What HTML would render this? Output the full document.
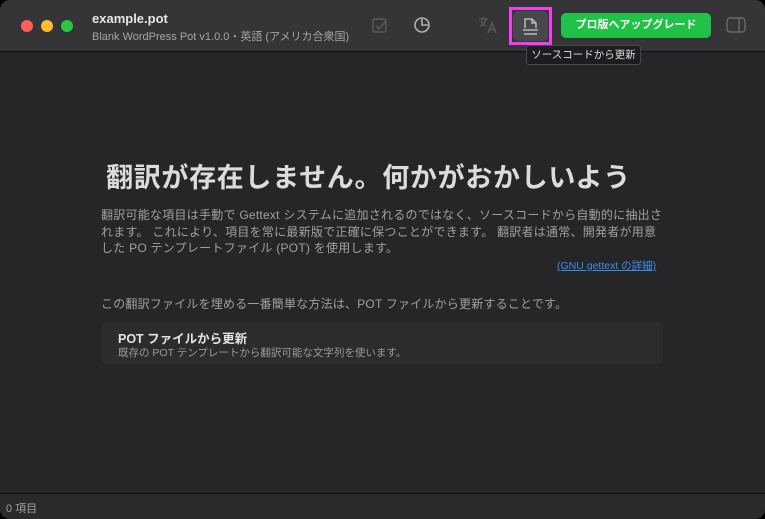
<!DOCTYPE html>
<html><head><meta charset="utf-8"><style>
*{margin:0;padding:0;box-sizing:border-box}
body{width:765px;height:519px;background:#000;font-family:"Liberation Sans","Noto Sans CJK JP",sans-serif;overflow:hidden}
.win{position:absolute;left:0;top:0;width:765px;height:519px;background:#262628;border-radius:10px;overflow:hidden}
.bar{position:absolute;left:0;top:0;width:765px;height:52px;background:#353538;border-bottom:1px solid #0e0e0f}
.dot{position:absolute;top:20px;width:12px;height:12px;border-radius:50%}
.t1{position:absolute;left:92px;top:11px;color:#e6e6e6;font-weight:bold;font-size:13px}
.t2{position:absolute;left:92px;top:28px;color:#a5a5a7;font-size:11px}
.btn{position:absolute;left:561px;top:13px;width:150px;height:25px;background:#1fc147;border-radius:5px;color:#fff;font-size:11px;font-weight:bold;text-align:center;line-height:25px}
.hl{position:absolute;left:509px;top:7px;width:43px;height:38px;border:3px solid #f03ef0}
.hlin{position:absolute;left:513px;top:11px;width:35px;height:30px;background:#48484b;border-radius:5px}
.tip{position:absolute;left:526px;top:45px;width:115px;height:20px;background:#1d1d1f;border:1px solid #4a4a4c;border-radius:3px;color:#ddd;font-size:10.5px;line-height:18px;text-align:center}
.h1{position:absolute;left:106px;top:156px;color:#dcdcdc;font-size:27px;font-weight:bold;letter-spacing:0.7px;white-space:nowrap}
.p{position:absolute;left:101px;top:207px;width:562px;color:#a0a0a2;font-size:12px;line-height:16.5px;letter-spacing:0.25px}
.link{position:absolute;left:557px;top:258px;color:#3a8ef0;font-size:10.5px;text-decoration:underline}
.p2{position:absolute;left:101px;top:295px;color:#a0a0a2;font-size:12px;letter-spacing:0.2px}
.card{position:absolute;left:101px;top:322px;width:562px;height:42px;background:#2c2c2e;border-radius:5px}
.c1{position:absolute;left:17px;top:6px;color:#e4e4e4;font-size:12.5px;font-weight:bold}
.c2{position:absolute;left:17px;top:23px;color:#9a9a9c;font-size:10.5px}
.status{position:absolute;left:0;top:493px;width:765px;height:26px;background:#2a2a2c;border-top:1px solid #0e0e0f;color:#a0a0a2;font-size:11px;padding:6px 0 0 6px}
</style></head><body><div class="win">
<div class="bar">
<div class="dot" style="left:21px;background:#fe5f57"></div>
<div class="dot" style="left:41px;background:#febc2e"></div>
<div class="dot" style="left:61px;background:#28c840"></div>
<div class="t1">example.pot</div>
<div class="t2">Blank WordPress Pot v1.0.0・英語 (アメリカ合衆国)</div>
<svg style="position:absolute;left:371px;top:17px" width="18" height="18" viewBox="0 0 18 18" fill="none" stroke="#5c5c5f" stroke-width="1.4"><rect x="2" y="2" width="13" height="13" rx="2"/><path d="M5 9l3 3 7-8"/></svg>
<svg style="position:absolute;left:413px;top:16px" width="18" height="18" viewBox="0 0 18 18" fill="none" stroke="#b0b0b2" stroke-width="1.6"><circle cx="9" cy="9" r="7"/><path d="M9 3v6h6"/></svg>
<svg style="position:absolute;left:478px;top:16px" width="20" height="18" viewBox="0 0 20 18" fill="none" stroke="#5c5c5f" stroke-width="1.3"><path d="M1 3h9M5 1v2M8 3c-1 4-3 6-6 7M3 5c1 2 3 4 5 5M10 17l4-10 4 10M11.5 13.5h5"/></svg>
<div class="hlin"></div>
<div class="hl"></div>
<svg style="position:absolute;left:521px;top:16px" width="19" height="20" viewBox="0 0 19 20" fill="none" stroke="#b8b8ba" stroke-width="1.5"><path d="M4 12V3h7l4 4v5M11 3v4h4M2 14h15M3 18h13"/></svg>
<div class="btn">プロ版へアップグレード</div>
<svg style="position:absolute;left:726px;top:17px" width="20" height="16" viewBox="0 0 20 16" fill="none" stroke="#6a6a6c" stroke-width="1.4"><rect x="1" y="1" width="18" height="14" rx="3"/><path d="M13 1v14"/></svg>
</div>
<div class="tip">ソースコードから更新</div>
<div class="h1">翻訳が存在しません。何かがおかしいよう</div>
<div class="p">翻訳可能な項目は手動で Gettext システムに追加されるのではなく、ソースコードから自動的に抽出さ<br>れます。 これにより、項目を常に最新版で正確に保つことができます。 翻訳者は通常、開発者が用意<br>した PO テンプレートファイル (POT) を使用します。</div>
<div class="link">(GNU gettext の詳細)</div>
<div class="p2">この翻訳ファイルを埋める一番簡単な方法は、POT ファイルから更新することです。</div>
<div class="card"><div class="c1">POT ファイルから更新</div><div class="c2">既存の POT テンプレートから翻訳可能な文字列を使います。</div></div>
<div class="status">0 項目</div>
</div></body></html>
